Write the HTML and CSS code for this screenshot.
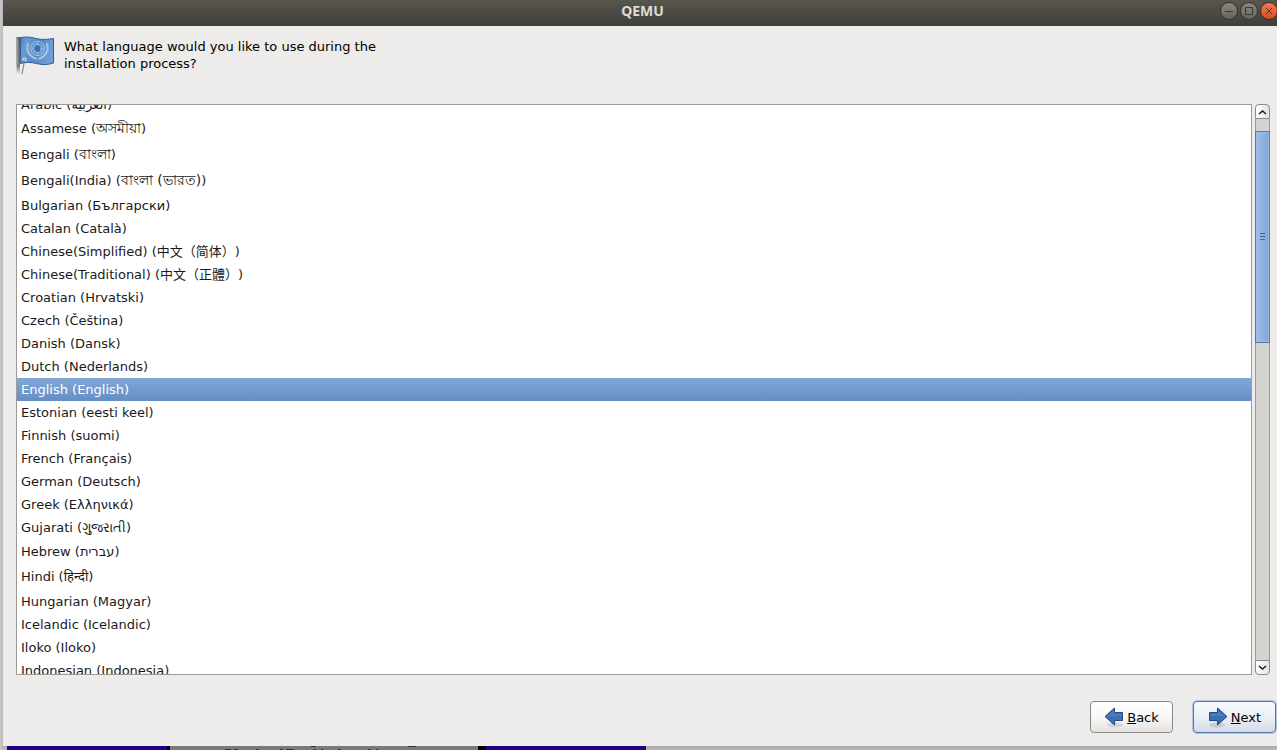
FILE: index.html
```html
<!DOCTYPE html>
<html lang="en">
<head>
    <meta charset="UTF-8">
    <meta name="viewport" content="width=device-width, initial-scale=1.0">
    <title>QEMU</title>
    <link rel="stylesheet" href="styles.css">
</head>
<body>
    <div class="desktop">
        <div class="window">
            <header class="titlebar">
                <h1>QEMU</h1>
                <div class="window-controls">
                    <button type="button" aria-label="Minimize">
                        <svg width="18" height="18" viewBox="0 0 18 18"><path d="M5 9.500h8"/></svg>
                    </button>
                    <button type="button" aria-label="Maximize">
                        <svg width="18" height="18" viewBox="0 0 18 18"><path d="M5.500 5.500h7v7h-7z"/></svg>
                    </button>
                    <button type="button" class="close" aria-label="Close">
                        <svg width="18" height="18" viewBox="0 0 18 18"><path d="M6 6l6 6M12 6l-6 6"/></svg>
                    </button>
                </div>
            </header>

            <form class="installer">
                <div class="question">
                    <svg class="flag" width="40" height="40" viewBox="0 0 40 40">
                        <defs>
                            <linearGradient id="pole" x1="0" y1="0" x2="0" y2="1">
                                <stop offset="0" stop-color="#5c5e5a"/>
                                <stop offset="0.75" stop-color="#6e706c"/>
                                <stop offset="1" stop-color="#6e706c" stop-opacity="0"/>
                            </linearGradient>
                            <linearGradient id="cloth" x1="0" y1="0" x2="1" y2="0.3">
                                <stop offset="0" stop-color="#4a7cba"/>
                                <stop offset="0.2" stop-color="#6a9bd3"/>
                                <stop offset="0.6" stop-color="#5688c6"/>
                                <stop offset="1" stop-color="#6c9fd8"/>
                            </linearGradient>
                        </defs>
                        <path d="M4.500 1.500C11 .5 14 1 20 2.500s12 1 17.500 0v24.500c-6 2-11 2-17 .5s-10-1.500-16 0z" fill="url(#cloth)" stroke="#2f5f9f"/>
                        <g fill="none" stroke="#a5c5e8" stroke-width="1">
                            <circle cx="21.500" cy="12.500" r="7"/>
                            <circle cx="21.500" cy="12.500" r="4.500"/>
                            <path d="M12.500 7c-3 7 0 13 8 16M30.500 7c3 7 0 13-8 16" stroke-width="2"/>
                            <path d="M21.500 5.500v15M14.500 12.500h14M16.500 7.500l10 10M26.500 7.500l-10 10" stroke-width="0.500"/>
                        </g>
                        <path d="M19 11l3-2 2 2v4l-3 1-1-2h-2z" fill="#346ead"/>
                        <path d="M0.500 1h3.500v37h-3.500z" fill="url(#pole)"/>
                        <path d="M1.800 2v27" stroke="#aaaca8"/>
                        <circle cx="8.500" cy="23.500" r="1.700" fill="#7aa6d8" stroke="#e4eaf0"/>
                        <path d="M4 27l4-2M8.500 25L6 38" fill="none" stroke="#777"/>
                    </svg>
                    <p>What language would you like to use during the installation process?</p>
                </div>

                <div class="list-area">
                    <div class="language-list" role="radiogroup" aria-label="Language">
                        <div class="rows">
                            <label class="row"><input type="radio" name="lang">Arabic (العربية)</label>
                            <label class="row tall"><input type="radio" name="lang">Assamese (<span class="bengali" lang="as">অসমীয়া</span>)</label>
                            <label class="row tall"><input type="radio" name="lang">Bengali (<span class="bengali" lang="bn">বাংলা</span>)</label>
                            <label class="row tall"><input type="radio" name="lang">Bengali(India) (<span class="bengali" lang="bn">বাংলা (ভারত)</span>)</label>
                            <label class="row"><input type="radio" name="lang">Bulgarian (Български)</label>
                            <label class="row"><input type="radio" name="lang">Catalan (Català)</label>
                            <label class="row"><input type="radio" name="lang">Chinese(Simplified) (<span class="cjk" lang="zh-CN">中文（简体）</span>)</label>
                            <label class="row"><input type="radio" name="lang">Chinese(Traditional) (<span class="cjk" lang="zh-TW">中文（正體）</span>)</label>
                            <label class="row"><input type="radio" name="lang">Croatian (Hrvatski)</label>
                            <label class="row"><input type="radio" name="lang">Czech (Čeština)</label>
                            <label class="row"><input type="radio" name="lang">Danish (Dansk)</label>
                            <label class="row"><input type="radio" name="lang">Dutch (Nederlands)</label>
                            <label class="row"><input type="radio" name="lang" checked>English (English)</label>
                            <label class="row"><input type="radio" name="lang">Estonian (eesti keel)</label>
                            <label class="row"><input type="radio" name="lang">Finnish (suomi)</label>
                            <label class="row"><input type="radio" name="lang">French (Français)</label>
                            <label class="row"><input type="radio" name="lang">German (Deutsch)</label>
                            <label class="row"><input type="radio" name="lang">Greek (Ελληνικά)</label>
                            <label class="row"><input type="radio" name="lang">Gujarati (ગુજરાતી)</label>
                            <label class="row mid"><input type="radio" name="lang">Hebrew (עברית)</label>
                            <label class="row tall"><input type="radio" name="lang">Hindi (हिन्दी)</label>
                            <label class="row"><input type="radio" name="lang">Hungarian (Magyar)</label>
                            <label class="row"><input type="radio" name="lang">Icelandic (Icelandic)</label>
                            <label class="row"><input type="radio" name="lang">Iloko (Iloko)</label>
                            <label class="row"><input type="radio" name="lang">Indonesian (Indonesia)</label>
                        </div>
                    </div>
                    <div class="scrollbar">
                        <button type="button" class="step up" aria-label="Scroll up">
                            <svg width="9" height="6" viewBox="0 0 9 6"><path d="M1 5l3.500-3L8 5"/></svg>
                        </button>
                        <div class="track">
                            <div class="thumb">
                                <svg width="5" height="7" viewBox="0 0 5 7"><path d="M0 .5h5M0 3.500h5M0 6.500h5"/></svg>
                            </div>
                        </div>
                        <button type="button" class="step down" aria-label="Scroll down">
                            <svg width="9" height="6" viewBox="0 0 9 6"><path d="M1 1l3.500 3L8 1"/></svg>
                        </button>
                    </div>
                </div>

                <div class="actions">
                    <button type="button" class="nav">
                        <svg width="20" height="22" viewBox="0 0 20 22">
                            <ellipse cx="11" cy="19" rx="8" ry="2.500" fill="#000" opacity="0.1"/>
                            <path d="M1 10.500l9.500-8.500v4.500h8v8h-8v4.500z" fill="#3d70b2" stroke="#204a87"/>
                            <path d="M3 10.300l6.500-6v3.200h8v2.500z" fill="#5f8ec8" opacity="0.4"/>
                        </svg>
                        <span><u>B</u>ack</span>
                    </button>
                    <button type="submit" class="nav default">
                        <svg width="20" height="22" viewBox="0 0 20 22">
                            <ellipse cx="9" cy="19" rx="8" ry="2.500" fill="#000" opacity="0.1"/>
                            <path d="M19 10.500L9.500 2v4.500h-8v8h8v4.500z" fill="#3d70b2" stroke="#204a87"/>
                            <path d="M17 10.300l-6.500-6v3.200h-8v2.500z" fill="#5f8ec8" opacity="0.4"/>
                        </svg>
                        <span><u>N</u>ext</span>
                    </button>
                </div>
            </form>
        </div>

        <!-- top edge of the terminal behind the window -->
        <div class="backdrop">
            <div class="purple"></div>
            <div class="dialog">
                <svg width="300" height="4" viewBox="0 0 300 4">
                    <path d="M138 0h5v1h-5zM235 0h8v1h-8zM52 3h6v1h-6zM61 3h4v1h-4zM83 3h3v1h-3zM107 3h3v1h-3zM113 3h8v1h-8zM141 3h2v1h-2zM148 3h2v1h-2zM165 3h3v1h-3zM195 3h3v1h-3zM203 3h2v1h-2z" fill="#333"/>
                </svg>
            </div>
            <div class="purple"></div>
        </div>
    </div>

    <script>
        document.querySelector('.installer').addEventListener('submit', function(e) {
            e.preventDefault();
        });
    </script>
</body>
</html>
```

FILE: styles.css
```css
* {
    box-sizing: border-box;
}
body {
    margin: 0;
    font-family: "DejaVu Sans", "Noto Sans", sans-serif;
    font-size: 13px;
    color: #000;
    background-color: #c4c4c4;
}
button {
    font: inherit;
    color: inherit;
    padding: 0;
    cursor: pointer;
}
.desktop {
    display: flex;
    flex-direction: column;
    height: 100vh;
    padding-left: 3px;
    overflow: hidden;
    background: linear-gradient(to right, #cbcbcb, #b8b8b8 3px);
}
.window {
    flex: 1;
    display: flex;
    flex-direction: column;
    min-height: 0;
    background-color: #edecea;
}
.titlebar {
    display: grid;
    grid-template-columns: 1fr auto 1fr;
    align-items: center;
    height: 26px;
    margin-right: -1px;
    padding: 0 0 4px 4px;
    background: linear-gradient(#59564e, #3f3e39);
}
.titlebar h1 {
    grid-column: 2;
    margin: 0;
    font-family: "Noto Sans", "Open Sans", sans-serif;
    font-size: 14px;
    line-height: 22px;
    font-weight: 700;
    color: #dfdbd2;
}
.window-controls {
    display: flex;
    justify-content: flex-end;
    gap: 2px;
}
.window-controls button {
    display: flex;
    width: 18px;
    height: 18px;
    border: 1px solid #33322e;
    border-radius: 50%;
    background: linear-gradient(#8a8881, #65635d);
}
.window-controls svg {
    flex: none;
    margin: -1px;
    fill: none;
    stroke: #3a3935;
}
.window-controls .close {
    background: linear-gradient(#f37a52, #e0481b);
}
.installer {
    flex: 1;
    display: flex;
    flex-direction: column;
    min-height: 0;
}
.question {
    display: flex;
    gap: 8px;
    height: 78px;
    padding: 10px 13px;
}
.question p {
    width: 330px;
    margin: 2px 0;
    line-height: 17px;
}
.flag {
    flex: none;
}
.list-area {
    flex: 1;
    display: flex;
    gap: 3px;
    min-height: 0;
    padding: 0 7px 0 13px;
}
.language-list {
    flex: 1;
    overflow: hidden;
    border: 1px solid #9b9a96;
    background-color: #fff;
}
.rows {
    margin-top: -12px;
}
.row {
    display: flex;
    align-items: center;
    height: 23px;
    padding-left: 4px;
    line-height: 17px;
    white-space: pre;
    color: #1a1a1a;
}
.row.mid {
    height: 25px;
}
.row.tall {
    height: 26px;
    padding-bottom: 2px;
}
.row input {
    appearance: none;
    width: 0;
    height: 0;
    margin: 0;
}
.row:has(input:checked) {
    color: #fff;
    background: linear-gradient(#83a7d8, #648ec4);
}
.bengali {
    font-size: 14px;
}
.cjk {
    font-family: "DejaVu Sans", "Noto Sans CJK SC", sans-serif;
}
.scrollbar {
    display: flex;
    flex-direction: column;
    width: 15px;
}
.step {
    display: flex;
    align-items: center;
    justify-content: center;
    height: 15px;
    border: 1px solid #8b8a86;
    background: linear-gradient(to right, #fff, #e4e3e1);
}
.step.up {
    border-radius: 4px 4px 0 0;
}
.step.down {
    border-radius: 0 0 4px 4px;
}
.step svg {
    fill: none;
    stroke: #1a1a1a;
    stroke-width: 1.5;
}
.track {
    flex: 1;
    padding-top: 12px;
    border: solid #9b9a96;
    border-width: 0 1px;
    background-color: #d4d3d0;
}
.thumb {
    display: flex;
    align-items: center;
    justify-content: center;
    height: 40%;
    margin: 0 -1px;
    border: 1px solid #5479ad;
    background: linear-gradient(to right, #a3c1e8, #7fa3d6);
    box-shadow: inset 0 0 0 1px #9dbce5;
}
.thumb svg {
    stroke: #3f6596;
}
.actions {
    display: flex;
    justify-content: flex-end;
    gap: 20px;
    padding: 26px 1px 13px;
}
.nav {
    display: flex;
    align-items: center;
    justify-content: center;
    gap: 3px;
    width: 83px;
    height: 32px;
    border: 1px solid #8b8a86;
    border-radius: 4px;
    background: linear-gradient(#fff, #f7f7f6 50%, #e4e3e1);
}
.nav.default {
    border-color: #4d75ab;
    background: linear-gradient(#f7fafe, #eceff5 50%, #d5dbe6);
    box-shadow: 0 0 0 1px #b5c8e2;
}
.backdrop {
    flex: none;
    display: flex;
    height: 4px;
    padding-left: 4px;
    background: linear-gradient(#a8a8a8, #bcbcbc);
}
.purple {
    width: 160px;
    background-color: #240080;
}
.dialog {
    width: 319px;
    padding-left: 3px;
    border: solid #000;
    border-width: 0 8px 0 3px;
    background-color: #7d7979;
}
.dialog svg {
    display: block;
}
```
